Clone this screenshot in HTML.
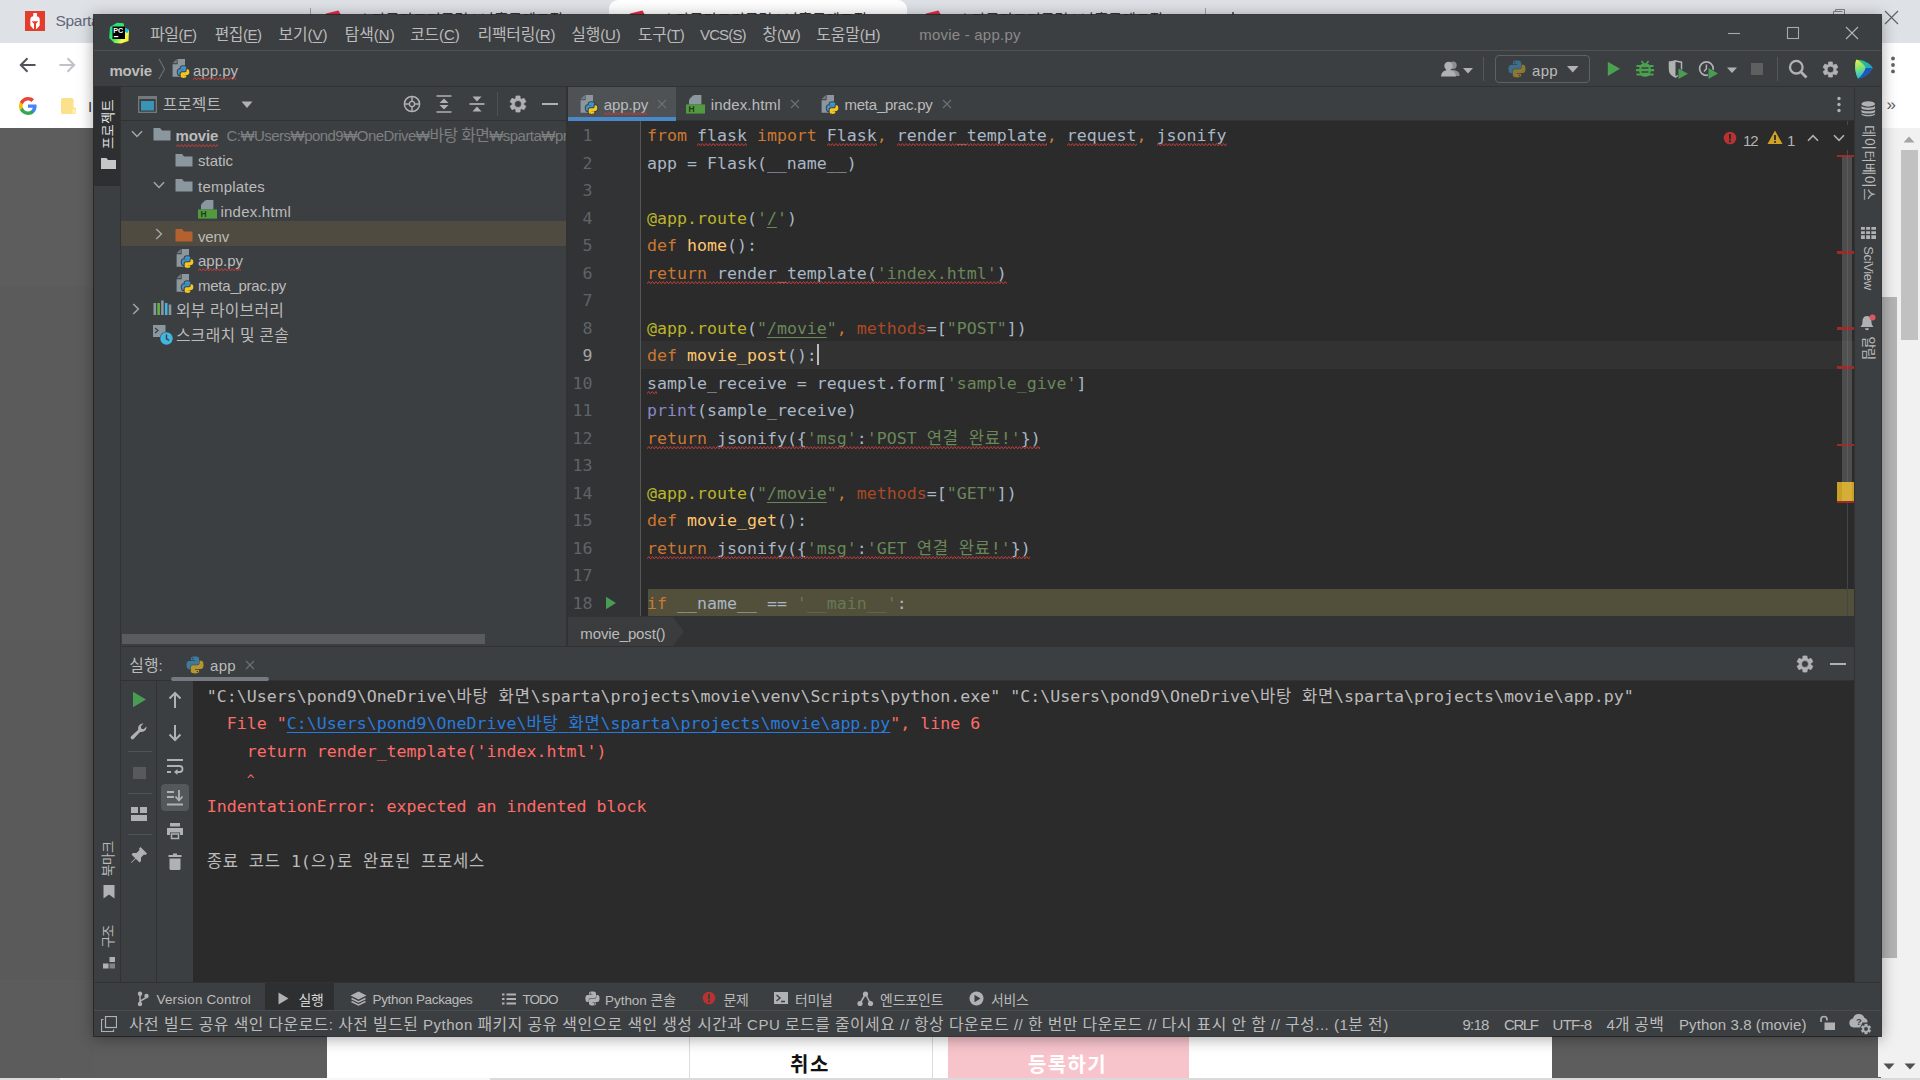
<!DOCTYPE html><html lang="ko"><head><meta charset="utf-8"><title>movie - app.py</title><style>html,body{margin:0;padding:0;width:1920px;height:1080px;overflow:hidden;background:#5d5d5d}
#root{position:relative;width:1920px;height:1080px;overflow:hidden}
#root>*{position:absolute;box-sizing:border-box}
#root>span{white-space:pre}
.ui{font:15px "Liberation Sans","Noto Sans CJK KR",sans-serif;color:#bbbbbb}
.bk{font:15px "Liberation Sans","Noto Sans CJK KR",sans-serif}
.code{font:16.600px "DejaVu Sans Mono","Noto Sans CJK KR",monospace;color:#a9b7c6}
.cl{white-space:pre;line-height:27.500px;height:27.500px}
.k{letter-spacing:0.750px}
u{text-decoration:underline;text-underline-offset:2px}
#t1{letter-spacing:1.594px}
#t2{letter-spacing:1.348px}
#t3{letter-spacing:-0.279px}
#t9{letter-spacing:-0.406px}
#t10{letter-spacing:-0.474px}
#t11{letter-spacing:-0.074px}
#t12{letter-spacing:0.000px}
#t13{letter-spacing:-0.140px}
#t14{letter-spacing:-0.237px}
#t15{letter-spacing:-0.100px}
#t16{letter-spacing:-0.366px}
#t17{letter-spacing:-0.860px}
#t18{letter-spacing:-0.188px}
#t19{letter-spacing:-0.046px}
#t20{letter-spacing:0.222px}
#t21{letter-spacing:-0.172px}
#t22{letter-spacing:-0.008px}
#t23{letter-spacing:0.323px}
#t24{letter-spacing:-0.003px}
#t25{letter-spacing:-0.172px}
#t27{letter-spacing:-0.003px}
#t28{letter-spacing:0.217px}
#t29{letter-spacing:0.212px}
#t30{letter-spacing:-0.172px}
#t31{letter-spacing:-0.008px}
#t32{letter-spacing:-0.241px}
#t33{letter-spacing:0.223px}
#t34{letter-spacing:0.290px}
#t35{letter-spacing:-0.091px}
#t36{letter-spacing:0.163px}
#t37{letter-spacing:-0.241px}
#t38{letter-spacing:-0.125px}
#t39{letter-spacing:-1.094px}
#t41{letter-spacing:0.024px}
#t42{letter-spacing:0.323px}
#t43{letter-spacing:0.146px}
#t44{letter-spacing:-0.281px}
#t45{letter-spacing:-0.339px}
#t46{letter-spacing:-0.941px}
#t47{letter-spacing:-0.038px}
#t48{letter-spacing:-0.281px}
#t49{letter-spacing:-0.281px}
#t50{letter-spacing:-0.081px}
#t51{letter-spacing:-0.281px}
#t52{letter-spacing:0.512px}
#t53{letter-spacing:-0.801px}
#t54{letter-spacing:-1.418px}
#t55{letter-spacing:-0.700px}
#t56{letter-spacing:0.250px}
#t57{letter-spacing:0.089px}
#t58{letter-spacing:0.367px}
#t59{letter-spacing:-0.302px}
#t60{letter-spacing:-1.133px}
#t61{letter-spacing:0.451px}
#t62{letter-spacing:-0.359px}
#t63{letter-spacing:-0.633px}
</style></head><body><div id="root">
<div style="left:0px;top:0px;width:1920px;height:43px;background:#dee1e6;"></div>
<div style="left:609px;top:0px;width:298px;height:43px;background:#fff;border-radius:9px 9px 0 0;"></div>
<div style="left:0px;top:43px;width:1920px;height:85px;background:#fff;"></div>
<div style="left:0px;top:128px;width:1881px;height:952px;background:#5d5d5d;"></div>
<div style="left:0px;top:287px;width:94px;height:353px;background:#5b5b5b;"></div>
<div style="left:0px;top:640px;width:94px;height:340px;background:#5a5a5a;"></div>
<div style="left:0px;top:980px;width:94px;height:100px;background:#5c5c5c;"></div>
<div style="left:1881px;top:128px;width:39px;height:952px;background:#f1f1f1;"></div>
<div style="left:1881px;top:297px;width:16px;height:661px;background:#b4b4b4;"></div>
<div style="left:1901px;top:150px;width:17px;height:190px;background:#c1c1c1;"></div>
<svg style="left:1903px;top:135px;" width="12" height="8" viewBox="0 0 12 8"><path d="M0.5 7.5 L6 1.5 L11.5 7.5Z" fill="#a3a3a3"/></svg>
<div style="left:327px;top:1036px;width:1225px;height:42px;background:#fff;"></div>
<div style="left:689px;top:1036px;width:244px;height:42px;background:#fff;border-left:1px solid #dcdcdc;border-right:1px solid #dcdcdc;"></div>
<div style="left:948px;top:1036px;width:241px;height:42px;background:#f8c4cc;"></div>
<span id="t1" class="bk" style="left:790px;top:1053.0px;line-height:24px;color:#111;font-weight:700;font-size:20px;">취소</span>
<span id="t2" class="bk" style="left:1028px;top:1053.0px;line-height:24px;color:#fff;font-weight:700;font-size:20px;">등록하기</span>
<div style="left:0px;top:1078px;width:1920px;height:2px;background:#dadada;"></div>
<div style="left:60px;top:1078px;width:430px;height:2px;background:#f7f7f7;"></div>
<div style="left:1552px;top:1036px;width:326px;height:41px;background:#5d5d5d;"></div>
<div style="left:1878px;top:1036px;width:42px;height:41px;background:#f1f1f1;"></div>
<svg style="left:1883px;top:1063px;" width="12" height="8" viewBox="0 0 12 8"><path d="M0.5 0.5 L11.5 0.5 L6 6.5Z" fill="#505050"/></svg>
<svg style="left:1904px;top:1063px;" width="12" height="8" viewBox="0 0 12 8"><path d="M0.5 0.5 L11.5 0.5 L6 6.5Z" fill="#505050"/></svg>
<svg style="left:25px;top:11px;" width="20" height="20" viewBox="0 0 20 20"><rect width="20" height="20" fill="#e23e2b"/><rect x="8.300" y="2" width="3.600" height="3.500" fill="#fff"/><path d="M5.300 8.500 C5.300 5.800 7.300 5 10 5 C12.700 5 14.700 5.800 14.700 8.500 L14.700 14.500 L11.600 18 L11 18 L11 12.800 L13.300 10.200 L6.700 10.200 L9 12.800 L9 18 L8.400 18 L5.300 14.500Z" fill="#fff"/></svg>
<span id="t3" class="bk" style="left:55.4px;top:10.5px;line-height:20px;color:#62677a;font-size:15.5px;">Sparta</span>
<svg style="left:325px;top:9px;" width="18" height="8" viewBox="0 0 18 8"><path d="M0 8 L1 4.500 L13.500 1.500 L17 8Z" fill="#dc2d45"/></svg>
<svg style="left:629px;top:9px;" width="18" height="8" viewBox="0 0 18 8"><path d="M0 8 L1 4.500 L13.500 1.500 L17 8Z" fill="#dc2d45"/></svg>
<svg style="left:925px;top:9px;" width="18" height="8" viewBox="0 0 18 8"><path d="M0 8 L1 4.500 L13.500 1.500 L17 8Z" fill="#dc2d45"/></svg>
<span id="t4" class="bk" style="left:358px;top:9.5px;line-height:20px;color:#33373c;font-size:15px;"><span style="font-size:15px">스파르타코딩클럽</span> | <span style="font-size:15px">나홀로메모장</span></span>
<span id="t5" class="bk" style="left:662px;top:9.5px;line-height:20px;color:#33373c;font-size:15px;"><span style="font-size:15px">스파르타코딩클럽</span> | <span style="font-size:15px">나홀로메모장</span></span>
<span id="t6" class="bk" style="left:958px;top:9.5px;line-height:20px;color:#33373c;font-size:15px;"><span style="font-size:15px">스파르타코딩클럽</span> | <span style="font-size:15px">나홀로메모장</span></span>
<div style="left:310px;top:8px;width:1px;height:8px;background:#9aa0a6;"></div>
<div style="left:1205px;top:8px;width:1px;height:8px;background:#9aa0a6;"></div>
<div style="left:1232px;top:12px;width:1.5px;height:4px;background:#5f6368;"></div>
<svg style="left:1884px;top:10px;" width="15" height="15" viewBox="0 0 15 15"><path d="M1 1 L14 14 M14 1 L1 14" stroke="#5f6368" stroke-width="1.2" fill="none"/></svg>
<svg style="left:1833px;top:9px;" width="12" height="8" viewBox="0 0 12 8"><path d="M0.5 7.5 V2.5 H9.5 M2.5 2.5 V0.5 H11.5 V7.5" stroke="#7a7e84" stroke-width="1" fill="none"/></svg>
<svg style="left:18px;top:55px;" width="20" height="20" viewBox="0 0 20 20"><path d="M17.5 10 H3 M9.5 3.2 L2.8 10 L9.5 16.8" stroke="#50545a" stroke-width="2" fill="none"/></svg>
<svg style="left:57px;top:55px;" width="20" height="20" viewBox="0 0 20 20"><path d="M2.5 10 H17 M10.5 3.2 L17.2 10 L10.5 16.8" stroke="#bfc2c6" stroke-width="2" fill="none"/></svg>
<svg style="left:19px;top:97px;" width="18" height="18" viewBox="0 0 18 18"><path d="M17.6 9.2c0-.6-.1-1.2-.2-1.8H9v3.4h4.8c-.2 1.1-.8 2-1.8 2.7v2.2h2.9c1.7-1.6 2.7-3.9 2.7-6.5z" fill="#4285f4"/><path d="M9 18c2.4 0 4.5-.8 6-2.200l-2.900-2.200c-.8.500-1.800.900-3.100.900-2.400 0-4.400-1.600-5.100-3.700H.9v2.300C2.400 16 5.500 18 9 18z" fill="#34a853"/><path d="M3.900 10.700c-.2-.5-.3-1.100-.3-1.700s.1-1.200.3-1.700V5H.9C.3 6.200 0 7.600 0 9s.3 2.800.9 4l3-2.300z" fill="#fbbc05"/><path d="M9 3.600c1.300 0 2.500.5 3.400 1.300l2.600-2.600C13.500.9 11.400 0 9 0 5.500 0 2.400 2 .9 5l3 2.300C4.600 5.200 6.600 3.600 9 3.600z" fill="#ea4335"/></svg>
<svg style="left:60px;top:97px;" width="17" height="18" viewBox="0 0 17 18"><path d="M1 2.500 A1.500 1.500 0 0 1 2.500 1 H12 A1.500 1.500 0 0 1 13.500 2.500 V10.500 H15 A1 1 0 0 1 16 11.500 V16 A1 1 0 0 1 15 17 H2.500 A1.500 1.500 0 0 1 1 15.500Z" fill="#fde08a"/><rect x="12.500" y="12" width="3" height="4.500" rx="1" fill="#fef0c0"/></svg>
<span id="t7" class="bk" style="left:88px;top:97.0px;line-height:20px;color:#3c4043;font-size:15px;">I</span>
<svg style="left:1889.5px;top:56px;" width="6" height="20" viewBox="0 0 6 20"><circle cx="3" cy="2.500" r="1.900" fill="#5f6368"/><circle cx="3" cy="9" r="1.900" fill="#5f6368"/><circle cx="3" cy="15.400" r="1.900" fill="#5f6368"/></svg>
<span id="t8" class="bk" style="left:1886.5px;top:95.0px;line-height:20px;color:#5f6368;font-size:17px;">»</span>
<div style="left:94px;top:15px;width:1787px;height:1021px;background:#3c3f41;box-shadow:0 2px 14px 1px rgba(0,0,0,.34), 0 0 0 1px rgba(40,40,40,.85);"></div>
<div style="left:94px;top:50px;width:1787px;height:1px;background:#515151;"></div>
<div style="left:94px;top:86px;width:1787px;height:1px;background:#323232;"></div>
<svg style="left:108px;top:22px;" width="22" height="22" viewBox="0 0 22 22"><defs><linearGradient id="pcg" x1="0" y1="0.2" x2="1" y2="0.9"><stop offset="0" stop-color="#21d789"/><stop offset="0.45" stop-color="#3bea62"/><stop offset="0.75" stop-color="#fcf84a"/><stop offset="1" stop-color="#e8f03a"/></linearGradient></defs>
<path d="M2 5 L9 0.8 L15.5 1.2 L16.5 5.5 L21 8 L20.5 19 L13 21.5 L6.5 21 L1.2 16Z" fill="url(#pcg)"/><path d="M16.500 5.500 L21 8 L19.500 11 L16 9.500Z" fill="#07c3f2"/>
<rect x="4.500" y="4.500" width="12.500" height="12.500" fill="#000"/><text x="5.300" y="11.200" font-family="Liberation Sans,sans-serif" font-weight="700" font-size="7.200" fill="#fff">PC</text><rect x="5.800" y="14" width="4.500" height="1.200" fill="#fff"/></svg>
<span id="t9" class="ui" style="left:150.2px;top:25.0px;line-height:20px;"><span style="font-size:15.85px">파일</span>(<u>F</u>)</span>
<span id="t10" class="ui" style="left:214.7px;top:25.0px;line-height:20px;"><span style="font-size:15.85px">편집</span>(<u>E</u>)</span>
<span id="t11" class="ui" style="left:278.5px;top:25.0px;line-height:20px;"><span style="font-size:15.85px">보기</span>(<u>V</u>)</span>
<span id="t12" class="ui" style="left:344.7px;top:25.0px;line-height:20px;"><span style="font-size:15.85px">탐색</span>(<u>N</u>)</span>
<span id="t13" class="ui" style="left:410.2px;top:25.0px;line-height:20px;"><span style="font-size:15.85px">코드</span>(<u>C</u>)</span>
<span id="t14" class="ui" style="left:477.7px;top:25.0px;line-height:20px;"><span style="font-size:15.85px">리팩터링</span>(<u>R</u>)</span>
<span id="t15" class="ui" style="left:571.2px;top:25.0px;line-height:20px;"><span style="font-size:15.85px">실행</span>(<u>U</u>)</span>
<span id="t16" class="ui" style="left:638px;top:25.0px;line-height:20px;"><span style="font-size:15.85px">도구</span>(<u>T</u>)</span>
<span id="t17" class="ui" style="left:700px;top:25.0px;line-height:20px;">VCS(<u>S</u>)</span>
<span id="t18" class="ui" style="left:762.5px;top:25.0px;line-height:20px;"><span style="font-size:15.85px">창</span>(<u>W</u>)</span>
<span id="t19" class="ui" style="left:816.2px;top:25.0px;line-height:20px;"><span style="font-size:15.85px">도움말</span>(<u>H</u>)</span>
<span id="t20" class="ui" style="left:919.2px;top:25.0px;line-height:20px;color:#8a8a8a;">movie - app.py</span>
<svg style="left:1727px;top:26px;" width="14" height="14" viewBox="0 0 14 14"><path d="M1 7.500 H13" stroke="#a7a9ab" stroke-width="1.100"/></svg>
<svg style="left:1786px;top:26px;" width="14" height="14" viewBox="0 0 14 14"><rect x="1.500" y="1.500" width="11" height="11" fill="none" stroke="#a7a9ab" stroke-width="1.100"/></svg>
<svg style="left:1845px;top:26px;" width="14" height="14" viewBox="0 0 14 14"><path d="M1 1 L13 13 M13 1 L1 13" stroke="#b4b6b8" stroke-width="1.100" fill="none"/></svg>
<span id="t21" class="ui" style="left:109.4px;top:61.0px;line-height:20px;font-weight:700;">movie</span>
<svg style="left:158px;top:58px;" width="8" height="22" viewBox="0 0 8 22"><path d="M1 1 L6.500 11 L1 21" stroke="#6e7173" stroke-width="1.100" fill="none"/></svg>
<svg style="left:172px;top:59px;" width="19" height="19" viewBox="0 0 19 19"><path d="M5.600 0 H13 V17.700 H0.600 V5.200 H5.600Z" fill="#8b969e"/><path d="M4.800 0 L0.600 4.300 H4.800Z" fill="#8b969e" opacity=".7"/>
<g transform="translate(5.400,7) scale(.68)" stroke="#3c3f41" stroke-width="3" paint-order="stroke" stroke-linejoin="round"><path d="M8.900 0.500 c-4.300 0-4 1.900-4 1.900 v1.900 h4.100 v.6 H3.300 S0.500 4.600 0.500 9 s2.400 4.200 2.400 4.200 h1.500 v-2 s-.1-2.400 2.400-2.400 h4.100 s2.300 0 2.300-2.200 V2.900 S13.500.500 8.900.500z" fill="#3d94cb"/>
<path d="M9.100 17.500 c4.300 0 4-1.900 4-1.900 v-1.900 H9 v-.6 h5.700 s2.800.3 2.800-4.100-2.400-4.200-2.400-4.200 h-1.500 v2 s.1 2.400-2.400 2.400 H7.100 s-2.300 0-2.300 2.200 v3.700 s-.3 2.400 4.300 2.400z" fill="#f5c520"/></g></svg>
<span id="t22" class="ui" style="left:193px;top:61.0px;line-height:20px;">app.py</span>
<svg style="left:193px;top:77.3px" width="43.0" height="3.4"><polyline points="0.0,2.9 1.8,0.5 3.6,2.9 5.4,0.5 7.2,2.9 9.0,0.5 10.8,2.9 12.6,0.5 14.4,2.9 16.2,0.5 18.0,2.9 19.8,0.5 21.6,2.9 23.4,0.5 25.2,2.9 27.0,0.5 28.8,2.9 30.6,0.5 32.4,2.9 34.2,0.5 36.0,2.9 37.8,0.5 39.6,2.9 41.4,0.5 43.0,2.9" fill="none" stroke="#bc3f3c" stroke-width="1"/></svg>
<svg style="left:1441px;top:61px;" width="19" height="16" viewBox="0 0 19 16"><circle cx="12" cy="4.300" r="3.700" fill="#afb1b3" opacity=".7"/><path d="M8 15 C8 10.500 10 9 12 9 S18 10 18.500 13.500 L18.500 15Z" fill="#afb1b3" opacity=".7"/><circle cx="7.500" cy="5" r="4.200" fill="#afb1b3"/><path d="M0 15.500 C0.500 11 3 9.500 5.500 9.200 L5.500 8 H9.500 L9.500 9.200 C12 9.500 14.500 11 15 15.500Z" fill="#afb1b3"/></svg>
<svg style="left:1463px;top:68px;" width="10" height="6" viewBox="0 0 10 6"><path d="M0 0 H10 L5 5.500Z" fill="#afb1b3"/></svg>
<div style="left:1483px;top:57px;width:1px;height:24px;background:#555759;"></div>
<div style="left:1495px;top:55px;width:95px;height:28px;background:transparent;border:1px solid #5e6163;border-radius:4px;"></div>
<svg style="left:1508px;top:60px;" width="18" height="18" viewBox="0 0 18 18"><path d="M8.900 0.500 c-4.300 0-4 1.900-4 1.900 v1.900 h4.100 v.6 H3.300 S0.500 4.600 0.500 9 s2.400 4.200 2.400 4.200 h1.500 v-2 s-.1-2.400 2.400-2.400 h4.100 s2.300 0 2.300-2.200 V2.900 S13.500.500 8.900.500z" fill="#3c6e8e"/><circle cx="6.600" cy="2.500" r=".8" fill="#3c3f41"/>
<path d="M9.100 17.500 c4.300 0 4-1.900 4-1.900 v-1.900 H9 v-.6 h5.700 s2.800.3 2.800-4.100-2.400-4.200-2.400-4.200 h-1.500 v2 s.1 2.400-2.400 2.400 H7.100 s-2.300 0-2.300 2.200 v3.700 s-.3 2.400 4.300 2.400z" fill="#8d7732"/><circle cx="11.400" cy="15.500" r=".8" fill="#3c3f41"/></svg>
<span id="t23" class="ui" style="left:1532px;top:61.0px;line-height:20px;">app</span>
<svg style="left:1567px;top:66px;" width="12" height="7" viewBox="0 0 12 7"><path d="M0 0 H11.500 L5.750 6.500Z" fill="#afb1b3"/></svg>
<svg style="left:1607px;top:61px;" width="14" height="16" viewBox="0 0 14 16"><path d="M0.800 0.800 L13 7.700 L0.800 15Z" fill="#4aa24f"/></svg>
<svg style="left:1636px;top:60px;" width="18" height="17" viewBox="0 0 18 17"><path d="M5.500 1 L7.500 3.500 M12.500 1 L10.500 3.500" stroke="#4aa24f" stroke-width="1.800" fill="none"/><path d="M0.500 6 H17.500 M0 10.200 H18 M0.500 14.500 H17.500" stroke="#4aa24f" stroke-width="2.200"/><rect x="3.300" y="3" width="11.400" height="13.800" rx="5.500" fill="#4aa24f"/><path d="M5.500 8 H12.500 M5.500 12 H12.500" stroke="#3c3f41" stroke-width="1.400"/></svg>
<svg style="left:1668px;top:60px;" width="22" height="20" viewBox="0 0 22 20"><path d="M1.500 2.200 L7.500 1 L13.500 2.200 V9 C13.500 13 11 15.500 7.500 17 C4 15.500 1.500 13 1.500 9Z" fill="#3c3f41" stroke="#afb1b3" stroke-width="1.500"/><path d="M1 1.800 L7.500 0.500 V17.500 C3.500 16 1 13 1 9Z" fill="#afb1b3"/><path d="M10.500 8.500 L20 13.700 L10.500 19Z" fill="#499c54" stroke="#3c3f41" stroke-width="1.200" paint-order="stroke"/></svg>
<svg style="left:1698px;top:60px;" width="22" height="20" viewBox="0 0 22 20"><circle cx="8.400" cy="8.600" r="6.800" fill="none" stroke="#afb1b3" stroke-width="1.700"/><path d="M8.400 4.500 V8.800 L6 11.500" stroke="#afb1b3" stroke-width="1.500" fill="none"/><path d="M10.500 8 L20 13.500 L10.500 19Z" fill="#499c54" stroke="#3c3f41" stroke-width="1.200" paint-order="stroke"/></svg>
<svg style="left:1727px;top:67px;" width="10" height="7" viewBox="0 0 10 7"><path d="M0 0.500 H10 L5 6Z" fill="#afb1b3"/></svg>
<div style="left:1750.5px;top:62.5px;width:12.5px;height:12.8px;background:#5e6060;"></div>
<div style="left:1777px;top:57px;width:1px;height:24px;background:#555759;"></div>
<svg style="left:1788px;top:59px;" width="20" height="20" viewBox="0 0 20 20"><circle cx="8.300" cy="8.200" r="6.300" fill="none" stroke="#afb1b3" stroke-width="2.300"/><path d="M12.800 12.800 L18.500 18.500" stroke="#afb1b3" stroke-width="2.800"/></svg>
<svg style="left:1821.5px;top:60.5px;" width="17" height="17" viewBox="0 0 20 20"><path fill="#afb1b3" fill-rule="evenodd" stroke="#afb1b3" stroke-width="0.8" stroke-linejoin="round" d="M7.47 4.01 L7.81 1.06 L12.19 1.06 L12.53 4.01 L13.92 4.81 L16.65 3.64 L18.83 7.43 L16.45 9.20 L16.45 10.80 L18.83 12.57 L16.65 16.36 L13.92 15.19 L12.53 15.99 L12.19 18.94 L7.81 18.94 L7.47 15.99 L6.08 15.19 L3.35 16.36 L1.17 12.57 L3.55 10.80 L3.55 9.20 L1.17 7.43 L3.35 3.64 L6.08 4.81Z M10 6.1 a3.9 3.9 0 1 0 0 7.8 a3.9 3.9 0 1 0 0 -7.8z"/></svg>
<svg style="left:1853px;top:59px;" width="21" height="21" viewBox="0 0 21 21"><defs><linearGradient id="sp1" x1="0.200" y1="0" x2="0.400" y2="1"><stop offset="0" stop-color="#fbf236"/><stop offset=".5" stop-color="#7fe07a"/><stop offset="1" stop-color="#14b6ee"/></linearGradient><linearGradient id="sp2" x1="0" y1="0" x2="1" y2="1"><stop offset="0" stop-color="#2fd07a"/><stop offset="1" stop-color="#1c8fe0"/></linearGradient><clipPath id="spc"><path d="M3.200 0.800 C9.500 0.500 16.500 3.500 19.800 9 C16.500 14.800 10.500 18.800 5 19.500 C2 14 1.300 6.500 3.200 0.800Z"/></clipPath></defs>
<g clip-path="url(#spc)"><rect width="21" height="21" fill="url(#sp2)"/><path d="M12.500 9 L21 9 L21 21 L4 21Z" fill="#1a58c0"/><path d="M3 0 C9 3.500 12 6.500 12.500 9 C11.500 13 8.500 16.500 4.500 20.500 L0 21 L0 0Z" fill="url(#sp1)"/></g></svg>
<div style="left:94px;top:87px;width:26px;height:896px;background:#3c3f41;"></div>
<div style="left:94px;top:87px;width:26px;height:99px;background:#2d2f30;"></div>
<div style="left:120px;top:87px;width:1px;height:896px;background:#323232;"></div>
<div style="left:121px;top:87px;width:445px;height:33px;background:#3c3f41;"></div>
<div style="left:121px;top:120px;width:445px;height:1px;background:#323232;"></div>
<svg style="left:138px;top:96px;" width="19" height="17" viewBox="0 0 19 17"><rect x="0.500" y="0.500" width="18" height="16" fill="#3c3f41" stroke="#73797d" stroke-width="1.600"/><rect x="0" y="0" width="19" height="3" fill="#73797d"/><rect x="3" y="5" width="13" height="9.500" fill="#3a94b8"/></svg>
<span id="t24" class="ui" style="left:162.7px;top:95.0px;line-height:20px;"><span style="font-size:15.85px">프로젝트</span></span>
<svg style="left:241px;top:101px;" width="12" height="8" viewBox="0 0 12 8"><path d="M0.500 0.500 H11.500 L6 7Z" fill="#afb1b3"/></svg>
<svg style="left:403px;top:95px;" width="18" height="18" viewBox="0 0 18 18"><circle cx="9" cy="9" r="7.600" fill="none" stroke="#afb1b3" stroke-width="1.500"/><circle cx="9" cy="9" r="2.600" fill="none" stroke="#afb1b3" stroke-width="1.300"/><path d="M9 1 V6 M9 12 V17 M1 9 H6 M12 9 H17" stroke="#afb1b3" stroke-width="1.500"/></svg>
<svg style="left:436px;top:95px;" width="16" height="18" viewBox="0 0 16 18"><path d="M0.500 1 H15.500 M0.500 17 H15.500" stroke="#afb1b3" stroke-width="1.700"/><path d="M8 3.500 L12.500 8 H3.500Z M8 14.500 L12.500 10 H3.500Z" fill="#afb1b3"/></svg>
<svg style="left:469px;top:95px;" width="16" height="18" viewBox="0 0 16 18"><path d="M0.500 9 H15.500" stroke="#afb1b3" stroke-width="1.700"/><path d="M8 6.500 L12.500 1.500 H3.500Z M8 11.500 L12.500 16.500 H3.500Z" fill="#afb1b3"/></svg>
<div style="left:497px;top:92px;width:1px;height:24px;background:#4e5153;"></div>
<svg style="left:509px;top:95px;" width="18" height="18" viewBox="0 0 20 20"><path fill="#afb1b3" fill-rule="evenodd" stroke="#afb1b3" stroke-width="0.8" stroke-linejoin="round" d="M7.47 4.01 L7.81 1.06 L12.19 1.06 L12.53 4.01 L13.92 4.81 L16.65 3.64 L18.83 7.43 L16.45 9.20 L16.45 10.80 L18.83 12.57 L16.65 16.36 L13.92 15.19 L12.53 15.99 L12.19 18.94 L7.81 18.94 L7.47 15.99 L6.08 15.19 L3.35 16.36 L1.17 12.57 L3.55 10.80 L3.55 9.20 L1.17 7.43 L3.35 3.64 L6.08 4.81Z M10 6.1 a3.9 3.9 0 1 0 0 7.8 a3.9 3.9 0 1 0 0 -7.8z"/></svg>
<div style="left:542px;top:103px;width:16px;height:2px;background:#afb1b3;"></div>
<div style="left:121px;top:121px;width:445px;height:513px;background:#3c3f41;"></div>
<div style="left:121px;top:221px;width:445px;height:25px;background:#4f4b41;"></div>
<div style="left:122px;top:634px;width:444px;height:10px;background:#3c3f41;"></div>
<div style="left:122px;top:634px;width:363px;height:10px;background:#595b5d;"></div>
<div style="left:566px;top:87px;width:2px;height:560px;background:#323232;"></div>
<svg style="left:131px;top:130px;" width="12" height="8" viewBox="0 0 12 8"><path d="M1 1.200 L6 6.400 L11 1.200" stroke="#a4a6a8" stroke-width="1.500" fill="none"/></svg>
<svg style="left:153px;top:126px;" width="18" height="15" viewBox="0 0 18 15"><path d="M0.500 2 H7 L9 4.500 H17.500 V14.500 H0.500Z" fill="#8b979f"/></svg>
<span id="t25" class="ui" style="left:175.6px;top:126.0px;line-height:20px;font-weight:700;">movie</span>
<svg style="left:175.5px;top:143.6px" width="42.5" height="3.4"><polyline points="0.0,2.9 1.8,0.5 3.6,2.9 5.4,0.5 7.2,2.9 9.0,0.5 10.8,2.9 12.6,0.5 14.4,2.9 16.2,0.5 18.0,2.9 19.8,0.5 21.6,2.9 23.4,0.5 25.2,2.9 27.0,0.5 28.8,2.9 30.6,0.5 32.4,2.9 34.2,0.5 36.0,2.9 37.8,0.5 39.6,2.9 41.4,0.5 42.5,2.9" fill="none" stroke="#bc3f3c" stroke-width="1"/></svg>
<span id="t26" class="ui" style="left:226.5px;top:126.0px;line-height:20px;color:#7d7f80;width:339.500px;overflow:hidden;letter-spacing:-0.540px;">C:₩Users₩pond9₩OneDrive₩<span style="font-size:15.85px">바탕</span> <span style="font-size:15.85px">화면</span>₩sparta₩projects₩movie</span>
<svg style="left:175px;top:152px;" width="18" height="15" viewBox="0 0 18 15"><path d="M0.500 2 H7 L9 4.500 H17.500 V14.500 H0.500Z" fill="#8b979f"/></svg>
<span id="t27" class="ui" style="left:198px;top:151.0px;line-height:20px;">static</span>
<svg style="left:153px;top:181px;" width="12" height="8" viewBox="0 0 12 8"><path d="M1 1.200 L6 6.400 L11 1.200" stroke="#a4a6a8" stroke-width="1.500" fill="none"/></svg>
<svg style="left:175px;top:177px;" width="18" height="15" viewBox="0 0 18 15"><path d="M0.500 2 H7 L9 4.500 H17.500 V14.500 H0.500Z" fill="#8b979f"/></svg>
<span id="t28" class="ui" style="left:198px;top:176.5px;line-height:20px;">templates</span>
<svg style="left:198px;top:199px;" width="19" height="20" viewBox="0 0 19 20"><path d="M8 1 H15.400 V10.400 H3 V6Z" fill="#8b969e"/><path d="M7.200 1 L3 5.200 H7.200Z" fill="#8b969e" opacity=".7"/><rect x="0" y="10.400" width="19" height="9.200" fill="#52993f"/><text x="2.600" y="18.300" font-family="Liberation Sans,sans-serif" font-weight="700" font-size="8.500" fill="#1f3f19">H</text></svg>
<span id="t29" class="ui" style="left:220.5px;top:201.5px;line-height:20px;">index.html</span>
<svg style="left:155px;top:228px;" width="8" height="12" viewBox="0 0 8 12"><path d="M1.200 1 L6.400 6 L1.200 11" stroke="#a4a6a8" stroke-width="1.500" fill="none"/></svg>
<svg style="left:175px;top:227px;" width="18" height="15" viewBox="0 0 18 15"><path d="M0.500 2 H7 L9 4.500 H17.500 V14.500 H0.500Z" fill="#b5602f"/></svg>
<span id="t30" class="ui" style="left:198px;top:226.5px;line-height:20px;">venv</span>
<svg style="left:176px;top:249px;" width="19" height="19" viewBox="0 0 19 19"><path d="M5.600 0 H13 V17.700 H0.600 V5.200 H5.600Z" fill="#8b969e"/><path d="M4.800 0 L0.600 4.300 H4.800Z" fill="#8b969e" opacity=".7"/>
<g transform="translate(5.400,7) scale(.68)" stroke="#3c3f41" stroke-width="3" paint-order="stroke" stroke-linejoin="round"><path d="M8.900 0.500 c-4.300 0-4 1.900-4 1.900 v1.900 h4.100 v.6 H3.300 S0.500 4.600 0.500 9 s2.400 4.200 2.400 4.200 h1.500 v-2 s-.1-2.400 2.400-2.400 h4.100 s2.300 0 2.300-2.200 V2.900 S13.500.500 8.900.500z" fill="#3d94cb"/>
<path d="M9.100 17.500 c4.300 0 4-1.900 4-1.900 v-1.900 H9 v-.6 h5.700 s2.800.3 2.800-4.100-2.400-4.200-2.400-4.200 h-1.500 v2 s.1 2.400-2.400 2.400 H7.100 s-2.300 0-2.300 2.200 v3.700 s-.3 2.400 4.300 2.400z" fill="#f5c520"/></g></svg>
<span id="t31" class="ui" style="left:198px;top:251.0px;line-height:20px;">app.py</span>
<svg style="left:198px;top:268px" width="43.0" height="3.4"><polyline points="0.0,2.9 1.8,0.5 3.6,2.9 5.4,0.5 7.2,2.9 9.0,0.5 10.8,2.9 12.6,0.5 14.4,2.9 16.2,0.5 18.0,2.9 19.8,0.5 21.6,2.9 23.4,0.5 25.2,2.9 27.0,0.5 28.8,2.9 30.6,0.5 32.4,2.9 34.2,0.5 36.0,2.9 37.8,0.5 39.6,2.9 41.4,0.5 43.0,2.9" fill="none" stroke="#bc3f3c" stroke-width="1"/></svg>
<svg style="left:176px;top:274px;" width="19" height="19" viewBox="0 0 19 19"><path d="M5.600 0 H13 V17.700 H0.600 V5.200 H5.600Z" fill="#8b969e"/><path d="M4.800 0 L0.600 4.300 H4.800Z" fill="#8b969e" opacity=".7"/>
<g transform="translate(5.400,7) scale(.68)" stroke="#3c3f41" stroke-width="3" paint-order="stroke" stroke-linejoin="round"><path d="M8.900 0.500 c-4.300 0-4 1.900-4 1.900 v1.900 h4.100 v.6 H3.300 S0.500 4.600 0.500 9 s2.400 4.200 2.400 4.200 h1.500 v-2 s-.1-2.400 2.400-2.400 h4.100 s2.300 0 2.300-2.200 V2.900 S13.500.500 8.900.500z" fill="#3d94cb"/>
<path d="M9.100 17.500 c4.300 0 4-1.900 4-1.900 v-1.900 H9 v-.6 h5.700 s2.800.3 2.800-4.100-2.400-4.200-2.400-4.200 h-1.500 v2 s.1 2.400-2.400 2.400 H7.100 s-2.300 0-2.300 2.200 v3.700 s-.3 2.400 4.300 2.400z" fill="#f5c520"/></g></svg>
<span id="t32" class="ui" style="left:198px;top:276.0px;line-height:20px;">meta_prac.py</span>
<svg style="left:132px;top:303px;" width="8" height="12" viewBox="0 0 8 12"><path d="M1.200 1 L6.400 6 L1.200 11" stroke="#a4a6a8" stroke-width="1.500" fill="none"/></svg>
<svg style="left:153px;top:300px;" width="19" height="16" viewBox="0 0 19 16"><rect x="0.500" y="3" width="2.600" height="12" fill="#8b979f"/><rect x="4.300" y="3" width="2.600" height="12" fill="#62b543"/><rect x="8.100" y="0.500" width="2.600" height="14.500" fill="#8b979f"/><rect x="11.900" y="3" width="2.600" height="12" fill="#40b6e0"/><rect x="15.700" y="4.500" width="2.600" height="10.500" fill="#8b979f"/></svg>
<span id="t33" class="ui" style="left:176px;top:300.5px;line-height:20px;"><span style="font-size:15.85px">외부</span> <span style="font-size:15.85px">라이브러리</span></span>
<svg style="left:153px;top:325px;" width="20" height="20" viewBox="0 0 20 20"><path d="M0 0 H12.500 V7 A6.500 6.500 0 0 0 7 12 H0Z" fill="#8b979f"/><path d="M2 3 L5 5.500 L2 8" stroke="#3c3f41" stroke-width="1.200" fill="none"/><circle cx="13.500" cy="13.500" r="6.200" fill="#40b6e0"/><path d="M13.500 9.500 V13.800 L16 15.300" stroke="#3c3f41" stroke-width="1.400" fill="none"/></svg>
<span id="t34" class="ui" style="left:176px;top:325.5px;line-height:20px;"><span style="font-size:15.85px">스크래치</span> <span style="font-size:15.85px">및</span> <span style="font-size:15.85px">콘솔</span></span>
<div style="left:568px;top:87px;width:1286px;height:34px;background:#3c3f41;"></div>
<div style="left:568px;top:120px;width:1286px;height:1px;background:#323232;"></div>
<div style="left:568px;top:87px;width:108px;height:34px;background:#4e5254;"></div>
<div style="left:568px;top:117px;width:108px;height:4px;background:#4a88c7;"></div>
<svg style="left:580px;top:95px;" width="19" height="19" viewBox="0 0 19 19"><path d="M5.600 0 H13 V17.700 H0.600 V5.200 H5.600Z" fill="#8b969e"/><path d="M4.800 0 L0.600 4.300 H4.800Z" fill="#8b969e" opacity=".7"/>
<g transform="translate(5.400,7) scale(.68)" stroke="#3c3f41" stroke-width="3" paint-order="stroke" stroke-linejoin="round"><path d="M8.900 0.500 c-4.300 0-4 1.900-4 1.900 v1.900 h4.100 v.6 H3.300 S0.500 4.600 0.500 9 s2.400 4.200 2.400 4.200 h1.500 v-2 s-.1-2.400 2.400-2.400 h4.100 s2.300 0 2.300-2.200 V2.900 S13.500.500 8.900.500z" fill="#3d94cb"/>
<path d="M9.100 17.500 c4.300 0 4-1.900 4-1.900 v-1.900 H9 v-.6 h5.700 s2.800.3 2.800-4.100-2.400-4.200-2.400-4.200 h-1.500 v2 s.1 2.400-2.400 2.400 H7.100 s-2.300 0-2.300 2.200 v3.700 s-.3 2.400 4.300 2.400z" fill="#f5c520"/></g></svg>
<span id="t35" class="ui" style="left:603.7px;top:95.3px;line-height:20px;">app.py</span>
<svg style="left:603.5px;top:112.3px" width="43.5" height="3.4"><polyline points="0.0,2.9 1.8,0.5 3.6,2.9 5.4,0.5 7.2,2.9 9.0,0.5 10.8,2.9 12.6,0.5 14.4,2.9 16.2,0.5 18.0,2.9 19.8,0.5 21.6,2.9 23.4,0.5 25.2,2.9 27.0,0.5 28.8,2.9 30.6,0.5 32.4,2.9 34.2,0.5 36.0,2.9 37.8,0.5 39.6,2.9 41.4,0.5 43.2,2.9 43.5,0.5" fill="none" stroke="#bc3f3c" stroke-width="1"/></svg>
<svg style="left:657px;top:99px;" width="10" height="10" viewBox="0 0 10 10"><path d="M1 1 L9 9 M9 1 L1 9" stroke="#6e7173" stroke-width="1.100" fill="none"/></svg>
<svg style="left:686px;top:94px;" width="19" height="20" viewBox="0 0 19 20"><path d="M8 1 H15.400 V10.400 H3 V6Z" fill="#8b969e"/><path d="M7.200 1 L3 5.200 H7.200Z" fill="#8b969e" opacity=".7"/><rect x="0" y="10.400" width="19" height="9.200" fill="#52993f"/><text x="2.600" y="18.300" font-family="Liberation Sans,sans-serif" font-weight="700" font-size="8.500" fill="#1f3f19">H</text></svg>
<span id="t36" class="ui" style="left:710.7px;top:95.3px;line-height:20px;">index.html</span>
<svg style="left:790px;top:99px;" width="10" height="10" viewBox="0 0 10 10"><path d="M1 1 L9 9 M9 1 L1 9" stroke="#6e7173" stroke-width="1.100" fill="none"/></svg>
<svg style="left:821px;top:95px;" width="19" height="19" viewBox="0 0 19 19"><path d="M5.600 0 H13 V17.700 H0.600 V5.200 H5.600Z" fill="#8b969e"/><path d="M4.800 0 L0.600 4.300 H4.800Z" fill="#8b969e" opacity=".7"/>
<g transform="translate(5.400,7) scale(.68)" stroke="#3c3f41" stroke-width="3" paint-order="stroke" stroke-linejoin="round"><path d="M8.900 0.500 c-4.300 0-4 1.900-4 1.900 v1.900 h4.100 v.6 H3.300 S0.500 4.600 0.500 9 s2.400 4.200 2.400 4.200 h1.500 v-2 s-.1-2.400 2.400-2.400 h4.100 s2.300 0 2.300-2.200 V2.900 S13.500.500 8.900.500z" fill="#3d94cb"/>
<path d="M9.100 17.500 c4.300 0 4-1.900 4-1.900 v-1.900 H9 v-.6 h5.700 s2.800.3 2.800-4.100-2.400-4.200-2.400-4.200 h-1.500 v2 s.1 2.400-2.400 2.400 H7.100 s-2.300 0-2.300 2.200 v3.700 s-.3 2.400 4.300 2.400z" fill="#f5c520"/></g></svg>
<span id="t37" class="ui" style="left:844.5px;top:95.3px;line-height:20px;">meta_prac.py</span>
<svg style="left:942px;top:99px;" width="10" height="10" viewBox="0 0 10 10"><path d="M1 1 L9 9 M9 1 L1 9" stroke="#6e7173" stroke-width="1.100" fill="none"/></svg>
<svg style="left:1836px;top:96px;" width="6" height="17" viewBox="0 0 6 17"><circle cx="3" cy="2.500" r="1.700" fill="#afb1b3"/><circle cx="3" cy="8.500" r="1.700" fill="#afb1b3"/><circle cx="3" cy="14.500" r="1.700" fill="#afb1b3"/></svg>
<div style="left:568px;top:121px;width:1286px;height:495px;background:#2b2b2b;"></div>
<div style="left:568px;top:121px;width:72px;height:495px;background:#313335;"></div>
<div style="left:640px;top:121px;width:1px;height:495px;background:#555555;"></div>
<div style="left:641px;top:341.0px;width:1213px;height:27.5px;background:#323232;"></div>
<div style="left:648px;top:589px;width:1206px;height:27px;background:#52503a;"></div>
<span class="code" style="right:1327.5px;top:122.0px;line-height:27.500px;color:#606366">1</span>
<span class="code" style="right:1327.5px;top:149.5px;line-height:27.500px;color:#606366">2</span>
<span class="code" style="right:1327.5px;top:177.0px;line-height:27.500px;color:#606366">3</span>
<span class="code" style="right:1327.5px;top:204.5px;line-height:27.500px;color:#606366">4</span>
<span class="code" style="right:1327.5px;top:232.0px;line-height:27.500px;color:#606366">5</span>
<span class="code" style="right:1327.5px;top:259.5px;line-height:27.500px;color:#606366">6</span>
<span class="code" style="right:1327.5px;top:287.0px;line-height:27.500px;color:#606366">7</span>
<span class="code" style="right:1327.5px;top:314.5px;line-height:27.500px;color:#606366">8</span>
<span class="code" style="right:1327.5px;top:342.0px;line-height:27.500px;color:#a4a3a3">9</span>
<span class="code" style="right:1327.5px;top:369.5px;line-height:27.500px;color:#606366">10</span>
<span class="code" style="right:1327.5px;top:397.0px;line-height:27.500px;color:#606366">11</span>
<span class="code" style="right:1327.5px;top:424.5px;line-height:27.500px;color:#606366">12</span>
<span class="code" style="right:1327.5px;top:452.0px;line-height:27.500px;color:#606366">13</span>
<span class="code" style="right:1327.5px;top:479.5px;line-height:27.500px;color:#606366">14</span>
<span class="code" style="right:1327.5px;top:507.0px;line-height:27.500px;color:#606366">15</span>
<span class="code" style="right:1327.5px;top:534.5px;line-height:27.500px;color:#606366">16</span>
<span class="code" style="right:1327.5px;top:562.0px;line-height:27.500px;color:#606366">17</span>
<span class="code" style="right:1327.5px;top:589.5px;line-height:27.500px;color:#606366">18</span>
<svg style="left:605px;top:596px;" width="12" height="14" viewBox="0 0 12 14"><path d="M1 0.800 L11 7 L1 13.200Z" fill="#499c54"/></svg>
<div class="code cl" style="left:647px;top:122.0px;"><span style="color:#cc7832;">from</span> flask <span style="color:#cc7832;">import</span> Flask<span style="color:#cc7832;">,</span> render_template<span style="color:#cc7832;">,</span> request<span style="color:#cc7832;">,</span> jsonify</div>
<div class="code cl" style="left:647px;top:149.5px;">app = Flask(__name__)</div>
<div class="code cl" style="left:647px;top:204.5px;"><span style="color:#bbb529;">@app.route</span>(<span style="color:#6a8759;">'<span style="text-decoration:underline;text-underline-offset:3px;">/</span>'</span>)</div>
<div class="code cl" style="left:647px;top:232.0px;"><span style="color:#cc7832;">def</span> <span style="color:#ffc66d;">home</span>():</div>
<div class="code cl" style="left:647px;top:259.5px;"><span style="color:#cc7832;">return</span> render_template(<span style="color:#6a8759;">'index.html'</span>)</div>
<div class="code cl" style="left:647px;top:314.5px;"><span style="color:#bbb529;">@app.route</span>(<span style="color:#6a8759;">"<span style="text-decoration:underline;text-underline-offset:3px;">/movie</span>"</span><span style="color:#cc7832;">,</span> <span style="color:#aa4926;">methods</span>=[<span style="color:#6a8759;">"POST"</span>])</div>
<div class="code cl" style="left:647px;top:342.0px;"><span style="color:#cc7832;">def</span> <span style="color:#ffc66d;">movie_post</span>():</div>
<div class="code cl" style="left:647px;top:369.5px;">sample_receive = request.form[<span style="color:#6a8759;">'sample_give'</span>]</div>
<div class="code cl" style="left:647px;top:397.0px;"><span style="color:#8888c6;">print</span>(sample_receive)</div>
<div class="code cl" style="left:647px;top:424.5px;"><span style="color:#cc7832;">return</span> jsonify({<span style="color:#6a8759;">'msg'</span>:<span style="color:#6a8759;">'POST <span class="k">연결</span> <span class="k">완료</span>!'</span>})</div>
<div class="code cl" style="left:647px;top:479.5px;"><span style="color:#bbb529;">@app.route</span>(<span style="color:#6a8759;">"<span style="text-decoration:underline;text-underline-offset:3px;">/movie</span>"</span><span style="color:#cc7832;">,</span> <span style="color:#aa4926;">methods</span>=[<span style="color:#6a8759;">"GET"</span>])</div>
<div class="code cl" style="left:647px;top:507.0px;"><span style="color:#cc7832;">def</span> <span style="color:#ffc66d;">movie_get</span>():</div>
<div class="code cl" style="left:647px;top:534.5px;"><span style="color:#cc7832;">return</span> jsonify({<span style="color:#6a8759;">'msg'</span>:<span style="color:#6a8759;">'GET <span class="k">연결</span> <span class="k">완료</span>!'</span>})</div>
<div class="code cl" style="left:647px;top:589.5px;"><span style="color:#cc7832;">if</span> __name__ == <span style="color:#657a52;">'__main__'</span>:</div>
<svg style="left:697px;top:143.3px" width="50.0" height="3.4"><polyline points="0.0,2.9 1.8,0.5 3.6,2.9 5.4,0.5 7.2,2.9 9.0,0.5 10.8,2.9 12.6,0.5 14.4,2.9 16.2,0.5 18.0,2.9 19.8,0.5 21.6,2.9 23.4,0.5 25.2,2.9 27.0,0.5 28.8,2.9 30.6,0.5 32.4,2.9 34.2,0.5 36.0,2.9 37.8,0.5 39.6,2.9 41.4,0.5 43.2,2.9 45.0,0.5 46.8,2.9 48.6,0.5 50.0,2.9" fill="none" stroke="#bc3f3c" stroke-width="1"/></svg>
<svg style="left:827px;top:143.3px" width="50.0" height="3.4"><polyline points="0.0,2.9 1.8,0.5 3.6,2.9 5.4,0.5 7.2,2.9 9.0,0.5 10.8,2.9 12.6,0.5 14.4,2.9 16.2,0.5 18.0,2.9 19.8,0.5 21.6,2.9 23.4,0.5 25.2,2.9 27.0,0.5 28.8,2.9 30.6,0.5 32.4,2.9 34.2,0.5 36.0,2.9 37.8,0.5 39.6,2.9 41.4,0.5 43.2,2.9 45.0,0.5 46.8,2.9 48.6,0.5 50.0,2.9" fill="none" stroke="#bc3f3c" stroke-width="1"/></svg>
<svg style="left:897px;top:143.3px" width="150.0" height="3.4"><polyline points="0.0,2.9 1.8,0.5 3.6,2.9 5.4,0.5 7.2,2.9 9.0,0.5 10.8,2.9 12.6,0.5 14.4,2.9 16.2,0.5 18.0,2.9 19.8,0.5 21.6,2.9 23.4,0.5 25.2,2.9 27.0,0.5 28.8,2.9 30.6,0.5 32.4,2.9 34.2,0.5 36.0,2.9 37.8,0.5 39.6,2.9 41.4,0.5 43.2,2.9 45.0,0.5 46.8,2.9 48.6,0.5 50.4,2.9 52.2,0.5 54.0,2.9 55.8,0.5 57.6,2.9 59.4,0.5 61.2,2.9 63.0,0.5 64.8,2.9 66.6,0.5 68.4,2.9 70.2,0.5 72.0,2.9 73.8,0.5 75.6,2.9 77.4,0.5 79.2,2.9 81.0,0.5 82.8,2.9 84.6,0.5 86.4,2.9 88.2,0.5 90.0,2.9 91.8,0.5 93.6,2.9 95.4,0.5 97.2,2.9 99.0,0.5 100.8,2.9 102.6,0.5 104.4,2.9 106.2,0.5 108.0,2.9 109.8,0.5 111.6,2.9 113.4,0.5 115.2,2.9 117.0,0.5 118.8,2.9 120.6,0.5 122.4,2.9 124.2,0.5 126.0,2.9 127.8,0.5 129.6,2.9 131.4,0.5 133.2,2.9 135.0,0.5 136.8,2.9 138.6,0.5 140.4,2.9 142.2,0.5 144.0,2.9 145.8,0.5 147.6,2.9 149.4,0.5 150.0,2.9" fill="none" stroke="#bc3f3c" stroke-width="1"/></svg>
<svg style="left:1067px;top:143.3px" width="70.0" height="3.4"><polyline points="0.0,2.9 1.8,0.5 3.6,2.9 5.4,0.5 7.2,2.9 9.0,0.5 10.8,2.9 12.6,0.5 14.4,2.9 16.2,0.5 18.0,2.9 19.8,0.5 21.6,2.9 23.4,0.5 25.2,2.9 27.0,0.5 28.8,2.9 30.6,0.5 32.4,2.9 34.2,0.5 36.0,2.9 37.8,0.5 39.6,2.9 41.4,0.5 43.2,2.9 45.0,0.5 46.8,2.9 48.6,0.5 50.4,2.9 52.2,0.5 54.0,2.9 55.8,0.5 57.6,2.9 59.4,0.5 61.2,2.9 63.0,0.5 64.8,2.9 66.6,0.5 68.4,2.9 70.0,0.5" fill="none" stroke="#bc3f3c" stroke-width="1"/></svg>
<svg style="left:1157px;top:143.3px" width="70.0" height="3.4"><polyline points="0.0,2.9 1.8,0.5 3.6,2.9 5.4,0.5 7.2,2.9 9.0,0.5 10.8,2.9 12.6,0.5 14.4,2.9 16.2,0.5 18.0,2.9 19.8,0.5 21.6,2.9 23.4,0.5 25.2,2.9 27.0,0.5 28.8,2.9 30.6,0.5 32.4,2.9 34.2,0.5 36.0,2.9 37.8,0.5 39.6,2.9 41.4,0.5 43.2,2.9 45.0,0.5 46.8,2.9 48.6,0.5 50.4,2.9 52.2,0.5 54.0,2.9 55.8,0.5 57.6,2.9 59.4,0.5 61.2,2.9 63.0,0.5 64.8,2.9 66.6,0.5 68.4,2.9 70.0,0.5" fill="none" stroke="#bc3f3c" stroke-width="1"/></svg>
<svg style="left:647px;top:280.8px" width="360.0" height="3.4"><polyline points="0.0,2.9 1.8,0.5 3.6,2.9 5.4,0.5 7.2,2.9 9.0,0.5 10.8,2.9 12.6,0.5 14.4,2.9 16.2,0.5 18.0,2.9 19.8,0.5 21.6,2.9 23.4,0.5 25.2,2.9 27.0,0.5 28.8,2.9 30.6,0.5 32.4,2.9 34.2,0.5 36.0,2.9 37.8,0.5 39.6,2.9 41.4,0.5 43.2,2.9 45.0,0.5 46.8,2.9 48.6,0.5 50.4,2.9 52.2,0.5 54.0,2.9 55.8,0.5 57.6,2.9 59.4,0.5 61.2,2.9 63.0,0.5 64.8,2.9 66.6,0.5 68.4,2.9 70.2,0.5 72.0,2.9 73.8,0.5 75.6,2.9 77.4,0.5 79.2,2.9 81.0,0.5 82.8,2.9 84.6,0.5 86.4,2.9 88.2,0.5 90.0,2.9 91.8,0.5 93.6,2.9 95.4,0.5 97.2,2.9 99.0,0.5 100.8,2.9 102.6,0.5 104.4,2.9 106.2,0.5 108.0,2.9 109.8,0.5 111.6,2.9 113.4,0.5 115.2,2.9 117.0,0.5 118.8,2.9 120.6,0.5 122.4,2.9 124.2,0.5 126.0,2.9 127.8,0.5 129.6,2.9 131.4,0.5 133.2,2.9 135.0,0.5 136.8,2.9 138.6,0.5 140.4,2.9 142.2,0.5 144.0,2.9 145.8,0.5 147.6,2.9 149.4,0.5 151.2,2.9 153.0,0.5 154.8,2.9 156.6,0.5 158.4,2.9 160.2,0.5 162.0,2.9 163.8,0.5 165.6,2.9 167.4,0.5 169.2,2.9 171.0,0.5 172.8,2.9 174.6,0.5 176.4,2.9 178.2,0.5 180.0,2.9 181.8,0.5 183.6,2.9 185.4,0.5 187.2,2.9 189.0,0.5 190.8,2.9 192.6,0.5 194.4,2.9 196.2,0.5 198.0,2.9 199.8,0.5 201.6,2.9 203.4,0.5 205.2,2.9 207.0,0.5 208.8,2.9 210.6,0.5 212.4,2.9 214.2,0.5 216.0,2.9 217.8,0.5 219.6,2.9 221.4,0.5 223.2,2.9 225.0,0.5 226.8,2.9 228.6,0.5 230.4,2.9 232.2,0.5 234.0,2.9 235.8,0.5 237.6,2.9 239.4,0.5 241.2,2.9 243.0,0.5 244.8,2.9 246.6,0.5 248.4,2.9 250.2,0.5 252.0,2.9 253.8,0.5 255.6,2.9 257.4,0.5 259.2,2.9 261.0,0.5 262.8,2.9 264.6,0.5 266.4,2.9 268.2,0.5 270.0,2.9 271.8,0.5 273.6,2.9 275.4,0.5 277.2,2.9 279.0,0.5 280.8,2.9 282.6,0.5 284.4,2.9 286.2,0.5 288.0,2.9 289.8,0.5 291.6,2.9 293.4,0.5 295.2,2.9 297.0,0.5 298.8,2.9 300.6,0.5 302.4,2.9 304.2,0.5 306.0,2.9 307.8,0.5 309.6,2.9 311.4,0.5 313.2,2.9 315.0,0.5 316.8,2.9 318.6,0.5 320.4,2.9 322.2,0.5 324.0,2.9 325.8,0.5 327.6,2.9 329.4,0.5 331.2,2.9 333.0,0.5 334.8,2.9 336.6,0.5 338.4,2.9 340.2,0.5 342.0,2.9 343.8,0.5 345.6,2.9 347.4,0.5 349.2,2.9 351.0,0.5 352.8,2.9 354.6,0.5 356.4,2.9 358.2,0.5 360.0,2.9" fill="none" stroke="#bc3f3c" stroke-width="1"/></svg>
<svg style="left:647px;top:390.8px" width="10.0" height="3.4"><polyline points="0.0,2.9 1.8,0.5 3.6,2.9 5.4,0.5 7.2,2.9 9.0,0.5 10.0,2.9" fill="none" stroke="#bc3f3c" stroke-width="1"/></svg>
<svg style="left:647px;top:445.8px" width="393.0" height="3.4"><polyline points="0.0,2.9 1.8,0.5 3.6,2.9 5.4,0.5 7.2,2.9 9.0,0.5 10.8,2.9 12.6,0.5 14.4,2.9 16.2,0.5 18.0,2.9 19.8,0.5 21.6,2.9 23.4,0.5 25.2,2.9 27.0,0.5 28.8,2.9 30.6,0.5 32.4,2.9 34.2,0.5 36.0,2.9 37.8,0.5 39.6,2.9 41.4,0.5 43.2,2.9 45.0,0.5 46.8,2.9 48.6,0.5 50.4,2.9 52.2,0.5 54.0,2.9 55.8,0.5 57.6,2.9 59.4,0.5 61.2,2.9 63.0,0.5 64.8,2.9 66.6,0.5 68.4,2.9 70.2,0.5 72.0,2.9 73.8,0.5 75.6,2.9 77.4,0.5 79.2,2.9 81.0,0.5 82.8,2.9 84.6,0.5 86.4,2.9 88.2,0.5 90.0,2.9 91.8,0.5 93.6,2.9 95.4,0.5 97.2,2.9 99.0,0.5 100.8,2.9 102.6,0.5 104.4,2.9 106.2,0.5 108.0,2.9 109.8,0.5 111.6,2.9 113.4,0.5 115.2,2.9 117.0,0.5 118.8,2.9 120.6,0.5 122.4,2.9 124.2,0.5 126.0,2.9 127.8,0.5 129.6,2.9 131.4,0.5 133.2,2.9 135.0,0.5 136.8,2.9 138.6,0.5 140.4,2.9 142.2,0.5 144.0,2.9 145.8,0.5 147.6,2.9 149.4,0.5 151.2,2.9 153.0,0.5 154.8,2.9 156.6,0.5 158.4,2.9 160.2,0.5 162.0,2.9 163.8,0.5 165.6,2.9 167.4,0.5 169.2,2.9 171.0,0.5 172.8,2.9 174.6,0.5 176.4,2.9 178.2,0.5 180.0,2.9 181.8,0.5 183.6,2.9 185.4,0.5 187.2,2.9 189.0,0.5 190.8,2.9 192.6,0.5 194.4,2.9 196.2,0.5 198.0,2.9 199.8,0.5 201.6,2.9 203.4,0.5 205.2,2.9 207.0,0.5 208.8,2.9 210.6,0.5 212.4,2.9 214.2,0.5 216.0,2.9 217.8,0.5 219.6,2.9 221.4,0.5 223.2,2.9 225.0,0.5 226.8,2.9 228.6,0.5 230.4,2.9 232.2,0.5 234.0,2.9 235.8,0.5 237.6,2.9 239.4,0.5 241.2,2.9 243.0,0.5 244.8,2.9 246.6,0.5 248.4,2.9 250.2,0.5 252.0,2.9 253.8,0.5 255.6,2.9 257.4,0.5 259.2,2.9 261.0,0.5 262.8,2.9 264.6,0.5 266.4,2.9 268.2,0.5 270.0,2.9 271.8,0.5 273.6,2.9 275.4,0.5 277.2,2.9 279.0,0.5 280.8,2.9 282.6,0.5 284.4,2.9 286.2,0.5 288.0,2.9 289.8,0.5 291.6,2.9 293.4,0.5 295.2,2.9 297.0,0.5 298.8,2.9 300.6,0.5 302.4,2.9 304.2,0.5 306.0,2.9 307.8,0.5 309.6,2.9 311.4,0.5 313.2,2.9 315.0,0.5 316.8,2.9 318.6,0.5 320.4,2.9 322.2,0.5 324.0,2.9 325.8,0.5 327.6,2.9 329.4,0.5 331.2,2.9 333.0,0.5 334.8,2.9 336.6,0.5 338.4,2.9 340.2,0.5 342.0,2.9 343.8,0.5 345.6,2.9 347.4,0.5 349.2,2.9 351.0,0.5 352.8,2.9 354.6,0.5 356.4,2.9 358.2,0.5 360.0,2.9 361.8,0.5 363.6,2.9 365.4,0.5 367.2,2.9 369.0,0.5 370.8,2.9 372.6,0.5 374.4,2.9 376.2,0.5 378.0,2.9 379.8,0.5 381.6,2.9 383.4,0.5 385.2,2.9 387.0,0.5 388.8,2.9 390.6,0.5 392.4,2.9 393.0,0.5" fill="none" stroke="#bc3f3c" stroke-width="1"/></svg>
<svg style="left:647px;top:555.8px" width="383.0" height="3.4"><polyline points="0.0,2.9 1.8,0.5 3.6,2.9 5.4,0.5 7.2,2.9 9.0,0.5 10.8,2.9 12.6,0.5 14.4,2.9 16.2,0.5 18.0,2.9 19.8,0.5 21.6,2.9 23.4,0.5 25.2,2.9 27.0,0.5 28.8,2.9 30.6,0.5 32.4,2.9 34.2,0.5 36.0,2.9 37.8,0.5 39.6,2.9 41.4,0.5 43.2,2.9 45.0,0.5 46.8,2.9 48.6,0.5 50.4,2.9 52.2,0.5 54.0,2.9 55.8,0.5 57.6,2.9 59.4,0.5 61.2,2.9 63.0,0.5 64.8,2.9 66.6,0.5 68.4,2.9 70.2,0.5 72.0,2.9 73.8,0.5 75.6,2.9 77.4,0.5 79.2,2.9 81.0,0.5 82.8,2.9 84.6,0.5 86.4,2.9 88.2,0.5 90.0,2.9 91.8,0.5 93.6,2.9 95.4,0.5 97.2,2.9 99.0,0.5 100.8,2.9 102.6,0.5 104.4,2.9 106.2,0.5 108.0,2.9 109.8,0.5 111.6,2.9 113.4,0.5 115.2,2.9 117.0,0.5 118.8,2.9 120.6,0.5 122.4,2.9 124.2,0.5 126.0,2.9 127.8,0.5 129.6,2.9 131.4,0.5 133.2,2.9 135.0,0.5 136.8,2.9 138.6,0.5 140.4,2.9 142.2,0.5 144.0,2.9 145.8,0.5 147.6,2.9 149.4,0.5 151.2,2.9 153.0,0.5 154.8,2.9 156.6,0.5 158.4,2.9 160.2,0.5 162.0,2.9 163.8,0.5 165.6,2.9 167.4,0.5 169.2,2.9 171.0,0.5 172.8,2.9 174.6,0.5 176.4,2.9 178.2,0.5 180.0,2.9 181.8,0.5 183.6,2.9 185.4,0.5 187.2,2.9 189.0,0.5 190.8,2.9 192.6,0.5 194.4,2.9 196.2,0.5 198.0,2.9 199.8,0.5 201.6,2.9 203.4,0.5 205.2,2.9 207.0,0.5 208.8,2.9 210.6,0.5 212.4,2.9 214.2,0.5 216.0,2.9 217.8,0.5 219.6,2.9 221.4,0.5 223.2,2.9 225.0,0.5 226.8,2.9 228.6,0.5 230.4,2.9 232.2,0.5 234.0,2.9 235.8,0.5 237.6,2.9 239.4,0.5 241.2,2.9 243.0,0.5 244.8,2.9 246.6,0.5 248.4,2.9 250.2,0.5 252.0,2.9 253.8,0.5 255.6,2.9 257.4,0.5 259.2,2.9 261.0,0.5 262.8,2.9 264.6,0.5 266.4,2.9 268.2,0.5 270.0,2.9 271.8,0.5 273.6,2.9 275.4,0.5 277.2,2.9 279.0,0.5 280.8,2.9 282.6,0.5 284.4,2.9 286.2,0.5 288.0,2.9 289.8,0.5 291.6,2.9 293.4,0.5 295.2,2.9 297.0,0.5 298.8,2.9 300.6,0.5 302.4,2.9 304.2,0.5 306.0,2.9 307.8,0.5 309.6,2.9 311.4,0.5 313.2,2.9 315.0,0.5 316.8,2.9 318.6,0.5 320.4,2.9 322.2,0.5 324.0,2.9 325.8,0.5 327.6,2.9 329.4,0.5 331.2,2.9 333.0,0.5 334.8,2.9 336.6,0.5 338.4,2.9 340.2,0.5 342.0,2.9 343.8,0.5 345.6,2.9 347.4,0.5 349.2,2.9 351.0,0.5 352.8,2.9 354.6,0.5 356.4,2.9 358.2,0.5 360.0,2.9 361.8,0.5 363.6,2.9 365.4,0.5 367.2,2.9 369.0,0.5 370.8,2.9 372.6,0.5 374.4,2.9 376.2,0.5 378.0,2.9 379.8,0.5 381.6,2.9 383.0,0.5" fill="none" stroke="#bc3f3c" stroke-width="1"/></svg>
<div style="left:817px;top:344px;width:2px;height:21px;background:#bbbbbb;"></div>
<div style="left:568px;top:616px;width:1286px;height:31px;background:#313335;"></div>
<svg style="left:568px;top:617px;" width="117" height="29" viewBox="0 0 117 29"><path d="M0 0 H105 L116 14.500 L105 29 H0Z" fill="#3a3c3e"/></svg>
<span id="t38" class="ui" style="left:580.3px;top:623.5px;line-height:20px;">movie_post()</span>
<svg style="left:1723px;top:131px;" width="14" height="14" viewBox="0 0 14 14"><circle cx="7" cy="7" r="6.300" fill="#b93131"/><rect x="6" y="3" width="2" height="5.300" fill="#2b2b2b"/><rect x="6" y="9.300" width="2" height="2" fill="#2b2b2b"/></svg>
<span id="t39" class="ui" style="left:1743px;top:130.5px;line-height:20px;color:#b4b4b4;">12</span>
<svg style="left:1767px;top:130px;" width="16" height="15" viewBox="0 0 16 15"><path d="M8 0.500 L15.500 14 H0.500Z" fill="#cfa326"/><rect x="7.100" y="5" width="1.800" height="5" fill="#2b2b2b"/><rect x="7.100" y="11" width="1.800" height="1.800" fill="#2b2b2b"/></svg>
<span id="t40" class="ui" style="left:1787px;top:130.5px;line-height:20px;color:#b4b4b4;">1</span>
<svg style="left:1807px;top:134px;" width="12" height="8" viewBox="0 0 12 8"><path d="M1 6.800 L6 1.600 L11 6.800" stroke="#afb1b3" stroke-width="1.600" fill="none"/></svg>
<svg style="left:1833px;top:134px;" width="12" height="8" viewBox="0 0 12 8"><path d="M1 1.200 L6 6.400 L11 1.200" stroke="#afb1b3" stroke-width="1.600" fill="none"/></svg>
<div style="left:1842px;top:156px;width:10px;height:326px;background:rgba(166,166,166,.28);"></div>
<div style="left:1847px;top:482px;width:1px;height:134px;background:#454545;"></div>
<div style="left:1837px;top:154.5px;width:17px;height:2.5px;background:#9e2b2a;"></div>
<div style="left:1837px;top:251px;width:17px;height:2.5px;background:#9e2b2a;"></div>
<div style="left:1837px;top:327px;width:17px;height:2.5px;background:#9e2b2a;"></div>
<div style="left:1837px;top:366px;width:17px;height:2.5px;background:#9e2b2a;"></div>
<div style="left:1837px;top:443.5px;width:17px;height:2.5px;background:#9e2b2a;"></div>
<div style="left:1847px;top:121px;width:1px;height:4px;background:#4a4a4a;"></div>
<div style="left:1847px;top:150px;width:1px;height:5px;background:#4a4a4a;"></div>
<div style="left:1847px;top:156px;width:1px;height:326px;background:rgba(200,200,200,.12);"></div>
<div style="left:1837px;top:482px;width:17px;height:19px;background:#c9a026;"></div>
<div style="left:1842px;top:482px;width:10px;height:19px;background:#d4ae36;"></div>
<div style="left:1837px;top:501px;width:17px;height:2px;background:#9e2927;"></div>
<div style="left:122px;top:647px;width:1732px;height:33px;background:#3c3f41;"></div>
<div style="left:122px;top:646px;width:1732px;height:1px;background:#323232;"></div>
<span id="t41" class="ui" style="left:129.3px;top:656.0px;line-height:20px;"><span style="font-size:15.85px">실행</span>:</span>
<svg style="left:186px;top:656px;" width="18" height="18" viewBox="0 0 18 18"><path d="M8.900 0.500 c-4.300 0-4 1.900-4 1.900 v1.900 h4.100 v.6 H3.300 S0.500 4.600 0.500 9 s2.400 4.200 2.400 4.200 h1.500 v-2 s-.1-2.400 2.400-2.400 h4.100 s2.300 0 2.300-2.200 V2.900 S13.500.500 8.900.500z" fill="#3d7a9e"/><circle cx="6.600" cy="2.500" r=".8" fill="#3c3f41"/>
<path d="M9.100 17.500 c4.300 0 4-1.900 4-1.900 v-1.900 H9 v-.6 h5.700 s2.800.3 2.800-4.100-2.400-4.200-2.400-4.200 h-1.500 v2 s.1 2.400-2.400 2.400 H7.100 s-2.300 0-2.300 2.200 v3.700 s-.3 2.400 4.300 2.400z" fill="#b9962d"/><circle cx="11.400" cy="15.500" r=".8" fill="#3c3f41"/></svg>
<span id="t42" class="ui" style="left:210px;top:656.0px;line-height:20px;">app</span>
<svg style="left:245px;top:660px;" width="10" height="10" viewBox="0 0 10 10"><path d="M1 1 L9 9 M9 1 L1 9" stroke="#6e7173" stroke-width="1.100" fill="none"/></svg>
<svg style="left:1796px;top:655px;" width="18" height="18" viewBox="0 0 20 20"><path fill="#afb1b3" fill-rule="evenodd" stroke="#afb1b3" stroke-width="0.8" stroke-linejoin="round" d="M7.47 4.01 L7.81 1.06 L12.19 1.06 L12.53 4.01 L13.92 4.81 L16.65 3.64 L18.83 7.43 L16.45 9.20 L16.45 10.80 L18.83 12.57 L16.65 16.36 L13.92 15.19 L12.53 15.99 L12.19 18.94 L7.81 18.94 L7.47 15.99 L6.08 15.19 L3.35 16.36 L1.17 12.57 L3.55 10.80 L3.55 9.20 L1.17 7.43 L3.35 3.64 L6.08 4.81Z M10 6.1 a3.9 3.9 0 1 0 0 7.8 a3.9 3.9 0 1 0 0 -7.8z"/></svg>
<div style="left:1830px;top:663px;width:16px;height:2px;background:#afb1b3;"></div>
<div style="left:121px;top:680px;width:72px;height:303px;background:#3c3f41;"></div>
<div style="left:156px;top:680px;width:1px;height:303px;background:#323232;"></div>
<div style="left:193px;top:680px;width:1661px;height:303px;background:#2b2b2b;"></div>
<div style="left:1854px;top:87px;width:27px;height:896px;background:#3c3f41;"></div>
<div style="left:1854px;top:87px;width:1px;height:896px;background:#323232;"></div>
<div style="left:121px;top:680px;width:1733px;height:1px;background:#323232;"></div>
<div style="left:171px;top:677px;width:98px;height:4px;background:#747a80;border-radius:2px;"></div>
<svg style="left:132px;top:691px;" width="15" height="17" viewBox="0 0 15 17"><path d="M1 0.800 L14 8.500 L1 16.200Z" fill="#499c54"/></svg>
<svg style="left:130px;top:722px;" width="18" height="18" viewBox="0 0 18 18"><path d="M16.500 4.500 A4.800 4.800 0 0 1 10.300 9.700 L3.800 16.800 A1.700 1.700 0 0 1 1.200 14.300 L8.300 7.700 A4.800 4.800 0 0 1 13.500 1.500 L10.800 4.300 L11.300 6.700 L13.700 7.200Z" fill="#afb1b3"/></svg>
<div style="left:128px;top:751px;width:24px;height:1px;background:#515456;"></div>
<div style="left:132.5px;top:766.7px;width:13px;height:12.5px;background:#57595b;"></div>
<div style="left:128px;top:793px;width:24px;height:1px;background:#515456;"></div>
<svg style="left:131px;top:807px;" width="16" height="14" viewBox="0 0 16 14"><rect x="0" y="0" width="7" height="6" fill="#afb1b3"/><rect x="9" y="0" width="7" height="6" fill="#afb1b3"/><rect x="0" y="8" width="16" height="6" fill="#afb1b3"/></svg>
<div style="left:128px;top:834px;width:24px;height:1px;background:#515456;"></div>
<svg style="left:130px;top:846px;" width="18" height="18" viewBox="0 0 18 18"><path d="M10.500 1 L17 7.500 L15.500 9 L14 8.500 L11 11.500 L11 15 L9.500 16.500 L5.800 12.800 L1.500 17 L1 16.500 L5.200 12.200 L1.500 8.500 L3 7 L6.500 7 L9.500 4 L9 2.500Z" fill="#afb1b3"/></svg>
<svg style="left:168px;top:691px;" width="14" height="18" viewBox="0 0 14 18"><path d="M7 17 V2 M1.500 7.500 L7 2 L12.500 7.500" stroke="#afb1b3" stroke-width="2" fill="none"/></svg>
<svg style="left:168px;top:724px;" width="14" height="18" viewBox="0 0 14 18"><path d="M7 1 V16 M1.500 10.500 L7 16 L12.500 10.500" stroke="#afb1b3" stroke-width="2" fill="none"/></svg>
<svg style="left:166px;top:757px;" width="18" height="18" viewBox="0 0 18 18"><path d="M1 3 H17 M1 9 H13.500 A3 3 0 0 1 13.500 15 H9 M1 15 H5" stroke="#afb1b3" stroke-width="1.800" fill="none"/><path d="M11.500 12 L8 15 L11.500 18Z" fill="#afb1b3"/></svg>
<div style="left:161px;top:784px;width:28px;height:27px;background:#54585a;border-radius:4px;"></div>
<svg style="left:166px;top:789px;" width="18" height="17" viewBox="0 0 18 17"><path d="M1 3 H8 M1 8 H8 M1 15.500 H17" stroke="#afb1b3" stroke-width="1.800" fill="none"/><path d="M13 1 V11 M9.500 7.500 L13 11.500 L16.500 7.500" stroke="#afb1b3" stroke-width="1.800" fill="none"/></svg>
<svg style="left:166px;top:822px;" width="18" height="18" viewBox="0 0 18 18"><rect x="4" y="1" width="10" height="3.500" fill="#afb1b3"/><path d="M1 6 H17 V13 H14 V10.500 H4 V13 H1Z" fill="#afb1b3"/><rect x="5.500" y="12" width="7" height="4.500" fill="none" stroke="#afb1b3" stroke-width="1.500"/></svg>
<svg style="left:168px;top:853px;" width="14" height="17" viewBox="0 0 14 17"><path d="M5 0.500 H9 V2 H13.500 V4 H0.500 V2 H5Z M1.500 5.500 H12.500 V15.500 A1.500 1.500 0 0 1 11 17 H3 A1.500 1.500 0 0 1 1.500 15.500Z" fill="#afb1b3"/></svg>
<div class="code cl" style="left:206.800px;top:682.5px;"><span style="color:#bbbbbb">"C:\Users\pond9\OneDrive\<span class="k">바탕</span> <span class="k">화면</span>\sparta\projects\movie\venv\Scripts\python.exe" "C:\Users\pond9\OneDrive\<span class="k">바탕</span> <span class="k">화면</span>\sparta\projects\movie\app.py"</span></div>
<div class="code cl" style="left:206.800px;top:710.0px;"><span style="color:#ff6b68">  File "</span><span style="color:#287bde;text-decoration:underline;text-underline-offset:3px;">C:\Users\pond9\OneDrive\<span class="k">바탕</span> <span class="k">화면</span>\sparta\projects\movie\app.py</span><span style="color:#ff6b68">", line 6</span></div>
<div class="code cl" style="left:206.800px;top:737.5px;"><span style="color:#ff6b68">    return render_template('index.html')</span></div>
<div class="code cl" style="left:206.800px;top:765.0px;"><span style="color:#ff6b68">    <span style="font-size:13px">^</span></span></div>
<div class="code cl" style="left:206.800px;top:792.5px;"><span style="color:#ff6b68">IndentationError: expected an indented block</span></div>
<div class="code cl" style="left:206.800px;top:847.5px;"><span style="color:#bbbbbb"><span class="k">종료</span> <span class="k">코드</span> 1(<span class="k">으</span>)<span class="k">로</span> <span class="k">완료된</span> <span class="k">프로세스</span></span></div>
<div style="left:94px;top:983px;width:1787px;height:27px;background:#3c3f41;"></div>
<div style="left:94px;top:982px;width:1787px;height:1px;background:#323232;"></div>
<div style="left:265px;top:983px;width:69px;height:27px;background:#2d2f30;"></div>
<svg style="left:137px;top:991px;" width="12" height="16" viewBox="0 0 12 16"><circle cx="3" cy="2.800" r="2.200" fill="#afb1b3"/><circle cx="3" cy="13" r="2.200" fill="#afb1b3"/><circle cx="9.500" cy="5" r="2.200" fill="#afb1b3"/><path d="M3 3 V13 M9.500 5 C9.500 9 3 8 3 11" stroke="#afb1b3" stroke-width="1.500" fill="none"/></svg>
<span id="t43" class="ui" style="left:156.5px;top:990.0px;line-height:20px;font-size:13.500px;">Version Control</span>
<svg style="left:278px;top:992px;" width="11" height="13" viewBox="0 0 11 13"><path d="M0.500 0.500 L10.500 6.500 L0.500 12.500Z" fill="#afb1b3"/></svg>
<span id="t44" class="ui" style="left:298.5px;top:990.0px;line-height:20px;font-size:13.500px;color:#d8d8d8;"><span style="font-size:13.9px">실행</span></span>
<svg style="left:350px;top:991px;" width="17" height="15" viewBox="0 0 17 15"><path d="M8.500 0.500 L16.500 4.500 L8.500 8.500 L0.500 4.500Z" fill="#afb1b3"/><path d="M1.500 7.500 L8.500 11 L15.500 7.500 M1.500 10.500 L8.500 14 L15.500 10.500" stroke="#afb1b3" stroke-width="1.500" fill="none"/></svg>
<span id="t45" class="ui" style="left:372.5px;top:990.0px;line-height:20px;font-size:13.500px;">Python Packages</span>
<svg style="left:502px;top:993px;" width="14" height="12" viewBox="0 0 14 12"><path d="M0 1.500 H2.500 M4.500 1.500 H14 M0 6 H2.500 M4.500 6 H14 M0 10.500 H2.500 M4.500 10.500 H14" stroke="#afb1b3" stroke-width="1.900"/></svg>
<span id="t46" class="ui" style="left:522.5px;top:990.0px;line-height:20px;font-size:13.500px;">TODO</span>
<svg style="left:585px;top:991px;" width="15" height="15" viewBox="0 0 18 18"><path d="M8.900 0.500 c-4.300 0-4 1.900-4 1.900 v1.900 h4.100 v.6 H3.300 S0.500 4.600 0.500 9 s2.400 4.200 2.400 4.200 h1.500 v-2 s-.1-2.400 2.400-2.400 h4.100 s2.300 0 2.300-2.200 V2.900 S13.500.500 8.900.500z" fill="#afb1b3"/><circle cx="6.600" cy="2.500" r=".8" fill="#3c3f41"/>
<path d="M9.100 17.500 c4.300 0 4-1.900 4-1.900 v-1.900 H9 v-.6 h5.700 s2.800.3 2.800-4.100-2.400-4.200-2.400-4.200 h-1.500 v2 s.1 2.400-2.400 2.400 H7.100 s-2.300 0-2.300 2.200 v3.700 s-.3 2.400 4.300 2.400z" fill="#afb1b3"/><circle cx="11.400" cy="15.500" r=".8" fill="#3c3f41"/></svg>
<span id="t47" class="ui" style="left:605px;top:990.0px;line-height:20px;font-size:13.500px;">Python <span style="font-size:13.9px">콘솔</span></span>
<svg style="left:702px;top:991px;" width="14" height="14" viewBox="0 0 14 14"><circle cx="7" cy="7" r="6.300" fill="#b93131"/><rect x="6" y="3" width="2" height="5.300" fill="#3c3f41"/><rect x="6" y="9.300" width="2" height="2" fill="#3c3f41"/></svg>
<span id="t48" class="ui" style="left:723.5px;top:990.0px;line-height:20px;font-size:13.500px;"><span style="font-size:13.9px">문제</span></span>
<svg style="left:774px;top:992px;" width="14" height="12" viewBox="0 0 14 12"><rect width="14" height="12" fill="#afb1b3"/><path d="M2.500 3 L6 6 L2.500 9 M7 9.500 H11" stroke="#3c3f41" stroke-width="1.400" fill="none"/></svg>
<span id="t49" class="ui" style="left:795px;top:990.0px;line-height:20px;font-size:13.500px;"><span style="font-size:13.9px">터미널</span></span>
<svg style="left:857px;top:991px;" width="17" height="16" viewBox="0 0 17 16"><circle cx="8.500" cy="3" r="2.600" fill="#afb1b3"/><circle cx="3" cy="12.500" r="2.600" fill="#afb1b3"/><circle cx="13.500" cy="12.500" r="2.600" fill="#afb1b3"/><path d="M8.500 3 L3 12.500 M8.500 3 L13.500 12.500" stroke="#afb1b3" stroke-width="1.500"/></svg>
<span id="t50" class="ui" style="left:880px;top:990.0px;line-height:20px;font-size:13.500px;"><span style="font-size:13.9px">엔드포인트</span></span>
<svg style="left:969px;top:991px;" width="15" height="15" viewBox="0 0 15 15"><circle cx="7.500" cy="7.500" r="7" fill="#afb1b3"/><path d="M5.500 3.800 L11.500 7.500 L5.500 11.200Z" fill="#3c3f41"/></svg>
<span id="t51" class="ui" style="left:991px;top:990.0px;line-height:20px;font-size:13.500px;"><span style="font-size:13.9px">서비스</span></span>
<div style="left:94px;top:1010px;width:1787px;height:26px;background:#3c3f41;"></div>
<div style="left:94px;top:1010px;width:1787px;height:1px;background:#4a4d4f;"></div>
<svg style="left:101px;top:1016px;" width="16" height="16" viewBox="0 0 16 16"><rect x="4.500" y="0.500" width="11" height="11" fill="none" stroke="#afb1b3" stroke-width="1.200"/><path d="M2.500 3.500 H0.500 V15.500 H12.500 V13.500" fill="none" stroke="#afb1b3" stroke-width="1.200"/></svg>
<span id="t52" class="ui" style="left:129px;top:1015.0px;line-height:20px;"><span style="font-size:15.85px">사전</span> <span style="font-size:15.85px">빌드</span> <span style="font-size:15.85px">공유</span> <span style="font-size:15.85px">색인</span> <span style="font-size:15.85px">다운로드</span>: <span style="font-size:15.85px">사전</span> <span style="font-size:15.85px">빌드된</span> Python <span style="font-size:15.85px">패키지</span> <span style="font-size:15.85px">공유</span> <span style="font-size:15.85px">색인으로</span> <span style="font-size:15.85px">색인</span> <span style="font-size:15.85px">생성</span> <span style="font-size:15.85px">시간과</span> CPU <span style="font-size:15.85px">로드를</span> <span style="font-size:15.85px">줄이세요</span> // <span style="font-size:15.85px">항상</span> <span style="font-size:15.85px">다운로드</span> // <span style="font-size:15.85px">한</span> <span style="font-size:15.85px">번만</span> <span style="font-size:15.85px">다운로드</span> // <span style="font-size:15.85px">다시</span> <span style="font-size:15.85px">표시</span> <span style="font-size:15.85px">안</span> <span style="font-size:15.85px">함</span> // <span style="font-size:15.85px">구성</span>... (1<span style="font-size:15.85px">분</span> <span style="font-size:15.85px">전</span>)</span>
<span id="t53" class="ui" style="left:1462.5px;top:1015.0px;line-height:20px;">9:18</span>
<span id="t54" class="ui" style="left:1504px;top:1015.0px;line-height:20px;">CRLF</span>
<span id="t55" class="ui" style="left:1552.5px;top:1015.0px;line-height:20px;">UTF-8</span>
<span id="t56" class="ui" style="left:1606.5px;top:1015.0px;line-height:20px;">4<span style="font-size:15.85px">개</span> <span style="font-size:15.85px">공백</span></span>
<span id="t57" class="ui" style="left:1679px;top:1015.0px;line-height:20px;">Python 3.8 (movie)</span>
<svg style="left:1819px;top:1015px;" width="17" height="16" viewBox="0 0 17 16"><path d="M2 7 V4.500 A3 3 0 0 1 8 4.500 V5.500" fill="none" stroke="#afb1b3" stroke-width="1.700"/><rect x="5.500" y="7.500" width="10.500" height="7.500" fill="#afb1b3"/></svg>
<svg style="left:1848px;top:1013px;" width="24" height="22" viewBox="0 0 24 22"><path d="M5.500 14.500 A4.500 4.500 0 0 1 5 5.600 A6 6 0 0 1 16.500 5 A4.300 4.300 0 0 1 19.500 9.500 L14.500 9.500 L12 14.500Z" fill="#afb1b3"/><text x="8" y="11.500" font-family="Liberation Sans,sans-serif" font-weight="700" font-size="9.500" fill="#3c3f41">?</text><g transform="translate(12.500,10.500) scale(.55)"><path fill="#afb1b3" fill-rule="evenodd" stroke="#afb1b3" stroke-width="0.8" stroke-linejoin="round" d="M7.47 4.01 L7.81 1.06 L12.19 1.06 L12.53 4.01 L13.92 4.81 L16.65 3.64 L18.83 7.43 L16.45 9.20 L16.45 10.80 L18.83 12.57 L16.65 16.36 L13.92 15.19 L12.53 15.99 L12.19 18.94 L7.81 18.94 L7.47 15.99 L6.08 15.19 L3.35 16.36 L1.17 12.57 L3.55 10.80 L3.55 9.20 L1.17 7.43 L3.35 3.64 L6.08 4.81Z M10 6.1 a3.9 3.9 0 1 0 0 7.8 a3.9 3.9 0 1 0 0 -7.8z"/></g></svg>
<span id="t58" class="ui" style="left:84.2px;top:114.5px;line-height:18px;font-size:13px;color:#e0e0e0;transform:rotate(-90deg);transform-origin:50% 50%;width:50.0px;text-align:center;"><span style="font-size:13.2px">프로젝트</span></span>
<svg style="left:101px;top:157px;" width="15" height="12" viewBox="0 0 15 12"><path d="M0 1 H5.500 L7 3 H15 V12 H0Z" fill="#c4c6c8"/></svg>
<span id="t59" class="ui" style="left:91.45px;top:850.25px;line-height:18px;font-size:13px;color:#bbbbbb;transform:rotate(-90deg);transform-origin:50% 50%;width:35.5px;text-align:center;"><span style="font-size:13.2px">북마크</span></span>
<svg style="left:103px;top:885px;" width="12" height="14" viewBox="0 0 12 14"><path d="M0.500 0 H11.500 V13.500 L6 9.500 L0.500 13.500Z" fill="#afb1b3"/></svg>
<span id="t60" class="ui" style="left:98.2px;top:928.0px;line-height:18px;font-size:13px;color:#bbbbbb;transform:rotate(-90deg);transform-origin:50% 50%;width:22px;text-align:center;"><span style="font-size:13.2px">구조</span></span>
<svg style="left:103px;top:957px;" width="13" height="12" viewBox="0 0 13 12"><rect x="6.500" y="0" width="5.500" height="5" fill="#afb1b3"/><rect x="0" y="6.500" width="5.500" height="5" fill="#afb1b3"/><rect x="6.500" y="6.500" width="5.500" height="5" fill="#afb1b3" opacity=".6"/></svg>
<svg style="left:1861px;top:101px;" width="14.5" height="15.5" viewBox="0 0 16 17"><ellipse cx="8" cy="3.200" rx="7.500" ry="3" fill="#afb1b3"/><path d="M0.500 5.500 C2 8 14 8 15.500 5.500 V8 C14 10.500 2 10.500 0.500 8Z M0.500 9.500 C2 12 14 12 15.500 9.500 V12 C14 14.500 2 14.500 0.500 12Z M0.500 13.500 C2 16 14 16 15.500 13.500 V14.500 C14 17.500 2 17.500 0.500 14.500Z" fill="#afb1b3"/></svg>
<span id="t61" class="ui" style="left:1829.55px;top:153.75px;line-height:18px;font-size:13px;color:#bbbbbb;transform:rotate(90deg);transform-origin:50% 50%;width:75.5px;text-align:center;"><span style="font-size:13.2px">데이터베이스</span></span>
<svg style="left:1861px;top:227px;" width="15" height="12" viewBox="0 0 15 12"><path d="M0 0 H15 V12 H0Z" fill="#afb1b3"/><path d="M0 3.500 H15 M0 7.700 H15 M4.500 0 V12 M9.700 0 V12" stroke="#3c3f41" stroke-width="1.300"/></svg>
<span id="t62" class="ui" style="left:1845.55px;top:259.25px;line-height:18px;font-size:13px;color:#bbbbbb;transform:rotate(90deg);transform-origin:50% 50%;width:43.5px;text-align:center;">SciView</span>
<svg style="left:1859px;top:314px;" width="17" height="17" viewBox="0 0 17 17"><path d="M8 2 C4.500 2 3.500 5 3.500 8 C3.500 11 2 12 1.500 13 H14.500 C14 12 12.500 11 12.500 8 C12.500 5 11.500 2 8 2Z" fill="#afb1b3"/><path d="M6 14.300 A2 2 0 0 0 10 14.300Z" fill="#afb1b3"/><circle cx="13.500" cy="3.500" r="3" fill="#db5860"/></svg>
<span id="t63" class="ui" style="left:1855.8px;top:339.0px;line-height:18px;font-size:13px;color:#bbbbbb;transform:rotate(90deg);transform-origin:50% 50%;width:23.0px;text-align:center;"><span style="font-size:13.2px">알림</span></span>
</div></body></html>
